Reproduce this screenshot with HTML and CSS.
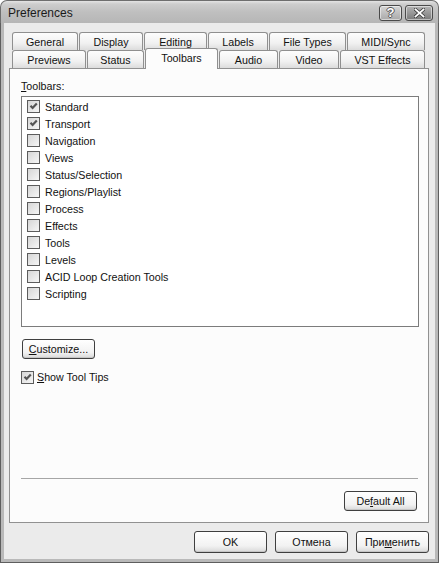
FILE: index.html
```html
<!DOCTYPE html>
<html lang="en">
<head>
  <meta charset="UTF-8">
  <title>Preferences</title>
  <link rel="stylesheet" href="styles.css">
</head>
<body>

<div class="window">
  <div class="titlebar">
    <span class="title">Preferences</span>
    <div class="caption-buttons">
      <span class="cap-btn help">?</span>
      <span class="cap-btn close">
        <svg width="11" height="10" viewBox="0 0 11 10">
          <path d="M1.5 1.5 L9.5 8.5 M9.5 1.5 L1.5 8.5" stroke="#3a3a3a" stroke-width="3.4" stroke-linecap="square"/>
          <path d="M1.5 1.5 L9.5 8.5 M9.5 1.5 L1.5 8.5" stroke="#fff" stroke-width="1.8" stroke-linecap="square"/>
        </svg>
      </span>
    </div>
  </div>

  <div class="frame">
    <!-- Pestañas -->
    <div class="tabs">
      <div class="tab-row">
        <div class="tab w67">General</div>
        <div class="tab w65">Display</div>
        <div class="tab w64">Editing</div>
        <div class="tab w61">Labels</div>
        <div class="tab w78">File Types</div>
        <div class="tab w79">MIDI/Sync</div>
      </div>
      <div class="tab-row front">
        <div class="tab w75">Previews</div>
        <div class="tab w58">Status</div>
        <div class="tab w74 active">Toolbars</div>
        <div class="tab w60">Audio</div>
        <div class="tab w61">Video</div>
        <div class="tab w86">VST Effects</div>
      </div>
    </div>

    <div class="panel">
      <div class="field-label"><u>T</u>oolbars:</div>
      <div class="listbox" id="toolbarList">
        <!-- filas generadas -->
      </div>

      <button class="btn customize"><u>C</u>ustomize...</button>

      <label class="check-line">
        <span class="checkbox checked"></span>
        <span><u>S</u>how Tool Tips</span>
      </label>

      <div class="spacer"></div>
      <div class="separator"></div>
      <div class="panel-footer">
        <button class="btn default-all">De<u>f</u>ault All</button>
      </div>
    </div>

    <div class="dialog-buttons">
      <button class="btn dlg">OK</button>
      <button class="btn dlg">Отмена</button>
      <button class="btn dlg">При<u>м</u>енить</button>
    </div>
  </div>
</div>

<script>
  const toolbars = [
    ['Standard', true],
    ['Transport', true],
    ['Navigation', false],
    ['Views', false],
    ['Status/Selection', false],
    ['Regions/Playlist', false],
    ['Process', false],
    ['Effects', false],
    ['Tools', false],
    ['Levels', false],
    ['ACID Loop Creation Tools', false],
    ['Scripting', false]
  ];

  const lista = document.getElementById('toolbarList');
  toolbars.forEach(([nombre, marcado]) => {
    const fila = document.createElement('div');
    fila.className = 'list-item';
    fila.innerHTML = `
      <span class="checkbox${marcado ? ' checked' : ''}"></span>
      <span>${nombre}</span>
    `;
    lista.appendChild(fila);
  });
</script>
</body>
</html>
```

FILE: styles.css
```css
/* Ventana de preferencias estilo XP (gris) */
body {
  margin: 0;
  background: #fff;
  font-family: "Liberation Sans", Arial, sans-serif;
  font-size: 10.7px;
  color: #111;
}
u {
  text-decoration: underline;
  text-underline-offset: 1px;
}
.window {
  width: 439px;
  height: 563px;
  display: flex;
  flex-direction: column;
}
.titlebar {
  height: 23px;
  box-sizing: border-box;
  display: flex;
  align-items: center;
  justify-content: space-between;
  padding: 0 5px 0 7px;
  border: 1px solid #6e6e6e;
  border-bottom: none;
  border-radius: 7px 7px 0 0;
  background: linear-gradient(#e4e4e4 0, #cdcdcd 3px, #bfbfbf 50%, #b6b6b6 100%);
}
.title {
  font-size: 12px;
  color: #1a1a1a;
  padding-top: 1px;
}
.caption-buttons {
  display: flex;
  gap: 3px;
  padding-top: 1px;
}
.cap-btn {
  height: 16px;
  box-sizing: border-box;
  border: 1px solid #4a4a4a;
  border-radius: 3px;
  display: flex;
  align-items: center;
  justify-content: center;
  background: linear-gradient(#d6d6d6, #a9a9a9);
  box-shadow: inset 0 0 0 1px rgba(255, 255, 255, 0.5);
}
.cap-btn.help {
  width: 23px;
  font-weight: bold;
  font-size: 13px;
  color: #fff;
  text-shadow: 1px 0 #555, -1px 0 #555, 0 1px #555, 0 -1px #555;
}
.cap-btn.close {
  width: 28px;
  background: linear-gradient(#b4b4b4, #7a7a7a);
}
.frame {
  flex: 1;
  display: flex;
  flex-direction: column;
  background: #ebebeb;
  border: 1px solid #5e5e5e;
  border-top: none;
  box-shadow: inset 3px 0 #b9b9b9, inset -3px 0 #b9b9b9, inset 0 -3px #b9b9b9;
  padding: 9px 9px 9px 3px;
}

/* Pestañas */
.tabs {
  margin-left: 8px;
}
.tab-row {
  display: flex;
  gap: 1px;
  height: 18px;
}
.tab-row.front {
  align-items: flex-end;
  position: relative;
  z-index: 1;
}
.tab {
  height: 18px;
  box-sizing: border-box;
  border: 1px solid #8f8f8f;
  border-bottom: none;
  border-radius: 3px 3px 0 0;
  background: linear-gradient(#fdfdfd, #f1f1f1 60%, #dcdcdc);
  text-align: center;
  line-height: 17px;
  padding-top: 1px;
  white-space: nowrap;
}
.tab.active {
  height: 21px;
  margin-bottom: -1px;
  background: #fcfcfc;
  line-height: 18px;
  padding-top: 0;
}
.w58 { width: 57px; }
.w60 { width: 59px; }
.w61 { width: 60px; }
.w64 { width: 63px; }
.w65 { width: 64px; }
.w67 { width: 66px; }
.w74 { width: 73px; }
.w75 { width: 74px; }
.w78 { width: 77px; }
.w79 { width: 78px; }
.w86 { width: 85px; }

/* Panel */
.panel {
  height: 455px;
  box-sizing: border-box;
  margin-left: 5px;
  width: 420px;
  border: 1px solid #919191;
  background: #fcfcfc;
  display: flex;
  flex-direction: column;
  padding: 11px 0 11px 11px;
}
.field-label {
  line-height: 13px;
}
.listbox {
  margin-top: 3px;
  width: 398px;
  height: 231px;
  box-sizing: border-box;
  border: 1px solid #7c7c7c;
  background: #fff;
  padding: 1px 0 0 5px;
}
.list-item {
  height: 17px;
  display: flex;
  align-items: center;
  gap: 5px;
}
.checkbox {
  width: 13px;
  height: 13px;
  box-sizing: border-box;
  border: 1px solid #5c5c5c;
  background: linear-gradient(135deg, #d6d6d6, #f6f6f6);
  flex: none;
}
.checkbox.checked {
  background:
    url("data:image/svg+xml,%3Csvg xmlns='http://www.w3.org/2000/svg' width='11' height='11'%3E%3Cpath d='M2.5 4.8 L4.6 7 L8.8 2.6' fill='none' stroke='%23555' stroke-width='2.2'/%3E%3C/svg%3E") center / 11px 11px no-repeat,
    linear-gradient(135deg, #d6d6d6, #f6f6f6);
}

/* Botones */
.btn {
  font-family: inherit;
  font-size: 10.7px;
  color: #111;
  height: 20px;
  box-sizing: border-box;
  border: 1px solid #3f3f3f;
  border-radius: 3px;
  background: linear-gradient(#ffffff, #f2f2f2 70%, #d8d8d8);
  box-shadow: inset 0 -1px #c6c6c6;
  padding: 0;
  margin: 0;
}
.customize {
  margin-top: 12px;
  margin-left: 1px;
  width: 73px;
  align-self: flex-start;
}
.check-line {
  margin-top: 12px;
  display: flex;
  align-items: center;
  gap: 3px;
  line-height: 13px;
  align-self: flex-start;
}
.spacer {
  flex: 1;
}
.separator {
  width: 397px;
  height: 1px;
  background: #a6a6a6;
}
.panel-footer {
  display: flex;
  justify-content: flex-end;
  padding-right: 11px;
  margin-top: 12px;
}
.default-all {
  width: 73px;
}
.dialog-buttons {
  display: flex;
  justify-content: flex-end;
  gap: 8px;
  margin-top: 8px;
}
.dlg {
  width: 73px;
  height: 22px;
}
```
